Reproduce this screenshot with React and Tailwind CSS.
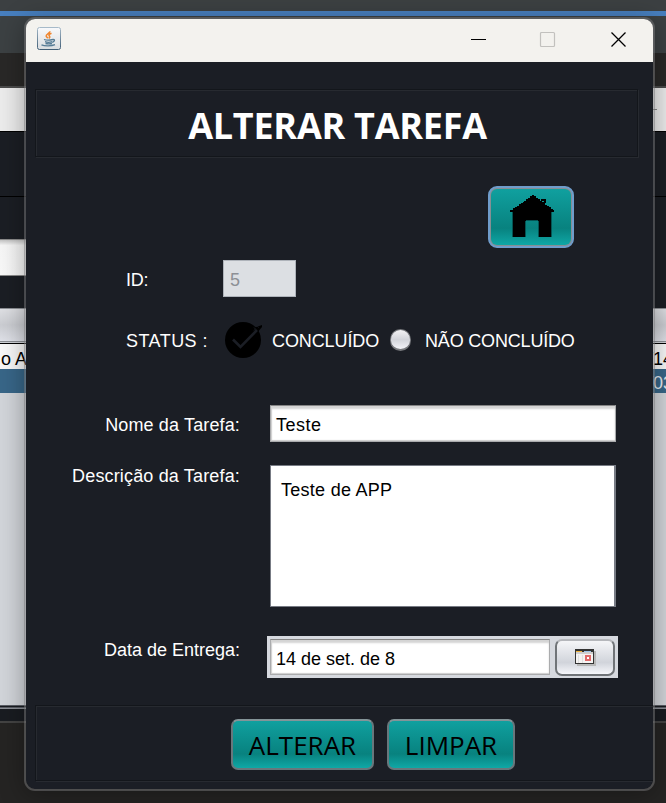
import React from 'react';

const sans = "font-['Liberation_Sans',Arial,sans-serif]";

function Desktop() {
  return (
    <div className="flex h-[803px] w-full flex-col bg-[#252423]">
      <div className="h-[11px] bg-[#3c4042]" />
      <div className="h-[5px] bg-[#477fbf]" />
      <div className="h-[37px] bg-[#3c4143]" />
      <div className="h-[33px] bg-[#292827]" />
      <div className="h-[2px] bg-[#4b4b4b]" />
      <div className="flex h-[43px] items-center justify-end bg-[#ececec]">
        <div className="mr-[9px] h-px w-[10px] bg-[#888]" />
      </div>
      <div className="h-px bg-black" />
      <div className="h-[64px] bg-[#1b1e24]" />
      <div className="h-px bg-black" />
      <div className="h-[42px] bg-[#1b1e24]" />
      <div className="flex h-[37px] bg-[#1b1e24]">
        <div className="w-[26px] border-y border-[#8b8b8b] bg-gradient-to-b from-[#c4c4c4] via-[#f6f6f6] via-15% to-[#f8f8f8]" />
      </div>
      <div className="h-[32px] bg-[#1b1e24]" />
      <div className="h-[34px] border-y border-[#8d9095] bg-gradient-to-b from-[#dfe0e4] via-[#cbcdd2] to-[#dfe1e8]" />
      <div className="h-px bg-[#d0d3d8]" />
      <div className="h-px bg-black" />
      <div className="flex h-[25px] items-center justify-between bg-[#f8f8f8] text-[18px] leading-[22px] text-black">
        <span className="pl-px pt-[5px]">o A</span>
        <span className="-mr-[7px] pt-[5px]">/14</span>
      </div>
      <div className="flex h-[24px] items-center justify-end bg-[#386688] text-[18px] leading-[22px] text-[#e6ebf0]">
        <span className="-mr-[7px] pt-[3px]">/03</span>
      </div>
      <div className="h-[312px] bg-[#d2d5da]" />
      <div className="h-px bg-[#5b5e66]" />
      <div className="h-px bg-[#191c21]" />
      <div className="h-px bg-[#5b5e66]" />
      <div className="h-px bg-[#8d9096]" />
      <div className="h-[12px] bg-[#191c21]" />
      <div className="h-[2px] bg-[#434343]" />
    </div>
  );
}

function JavaIcon() {
  return (
    <svg width="24" height="23" viewBox="0 0 24 23" fill="none">
      <defs>
        <linearGradient id="javaBg" x1="0" y1="0" x2="0" y2="1">
          <stop offset="0" stopColor="#f8f9fb" />
          <stop offset="1" stopColor="#d9dde0" />
        </linearGradient>
        <linearGradient id="javaEdge" x1="0" y1="0" x2="0" y2="1">
          <stop offset="0" stopColor="#a6bac9" />
          <stop offset="1" stopColor="#3f5d75" />
        </linearGradient>
      </defs>
      <rect x=".5" y=".5" width="23" height="22" rx="2" fill="url(#javaBg)" stroke="url(#javaEdge)" />
      <path d="M12.800 4.200c.6 2-4 2.700-3.600 4.900.2 1 1.400 1.300 1.600 2.300M14.500 6.300c-2.600 1-3 2-2 2.900.6.7.2 1.500-.6 2" stroke="#ef8630" strokeWidth="1.600" />
      <path d="M7 12.500c2 .8 6 .8 9 0M8 14.700c2 .7 5 .7 7 0M8.500 16.500c2 .5 4.500.5 6.500 0M15.500 12.400c2.800-.4 2.500 2.100-.3 2.900M4.500 17.800c3 1.400 10 1.400 13.500-.2" stroke="#557b95" strokeWidth="1.300" />
    </svg>
  );
}

function TitleBar() {
  return (
    <div className="flex h-[43px] shrink-0 items-start justify-between bg-[#f3f2ee] pl-[11px] pr-[26px] pt-[8px]">
      <JavaIcon />
      <div className="flex pt-[4px]">
        <svg width="17" height="17" className="mr-[52px] shrink-0"><path d="M1 8.500h15" stroke="#000" /></svg>
        <svg width="17" height="17" className="mr-[54px] shrink-0"><rect x="1.500" y="1.500" width="14" height="14" rx="1" fill="none" stroke="#c2c1be" strokeWidth="1.200" /></svg>
        <svg width="17" height="17" className="shrink-0"><path d="M1.500 1.500l14 14M15.500 1.500l-14 14" stroke="#000" strokeWidth="1.300" /></svg>
      </div>
    </div>
  );
}

function HomeButton() {
  return (
    <button className="ml-[462px] mt-[29px] flex h-[62px] w-[86px] shrink-0 rounded-[9px] border-2 border-[#6f9ccb] bg-[#868e93] p-px">
      <span className="flex h-full w-full justify-center rounded-[6px] bg-gradient-to-b from-[#10a09f] via-[#08827f] via-70% to-[#0fa7a6] pt-[5px]">
        <svg width="46" height="44" viewBox="0 0 46 44" shapeRendering="crispEdges">
          <path d="M5 18H2v-2h3v-2h2v-1h2v-1h2v-2h2V9h2V8h1V7h2V5h2V4h2V2h2V1h2v1h2v2h2v1h2v2h2v1h2v1h1v2h2v1h2v1h2v2h2v1h2v2h-3v25H30V27H18v16H5z" fill="#000" />
          <path d="M33 5h5v4h-2V7h-3z" fill="#000" />
          <path d="M17.500 27v16M18 26.500h12M30.500 27v16M43.500 18v25M4.500 18v25" stroke="#045554" />
        </svg>
      </span>
    </button>
  );
}

function CheckIcon() {
  return (
    <svg width="40" height="38" viewBox="0 0 40 38">
      <circle cx="19" cy="19" r="18" fill="#000" />
      <path d="M29 9.500l2-3 7-2.500v2l-5 6z" fill="#000" />
      <path d="M30 6.500l1.500 1.500-1.500 1.500M33.500 5.500l1 1" stroke="#1b1e25" fill="none" />
      <path d="M9 18.500l7.500 7.500L33 9" stroke="#1b1e25" strokeWidth="2.600" fill="none" />
    </svg>
  );
}

function CalendarIcon() {
  return (
    <svg width="21" height="17" viewBox="0 0 21 17" className="shrink-0" shapeRendering="crispEdges">
      <path d="M2 2h19v15H2z" fill="#b8b8b8" />
      <path d="M0 0h19v15H0z" fill="#333" />
      <path d="M1 2h17v12H1z" fill="#f5f3f2" />
      <path d="M1 2h6v1H1z" fill="#f0b43c" />
      <path d="M7 2h2v1H7z" fill="#333" />
      <path d="M9 2h7v1H9z" fill="#9cc5e9" />
      <path d="M16 2h2v1h-2z" fill="#333" />
      <path d="M1 3h17v2H1z" fill="#d0cece" />
      <path d="M3.500 6v8M7.500 6v8" stroke="#e0e0e0" />
      <rect x="11" y="7" width="4" height="4" fill="#fff" stroke="#e06a6a" strokeWidth="2" />
    </svg>
  );
}

function ActionButton({ children, width }) {
  return (
    <button className={`h-[51px] ${width} shrink-0 rounded-[7px] border-2 border-[#68777c] border-t-[#849498] bg-gradient-to-b from-[#10a09f] via-[#08827f] via-70% to-[#10a8a6] font-['Open_Sans','Noto_Sans',sans-serif] text-[26px] leading-none text-black`}>
      {children}
    </button>
  );
}

const etched = 'border border-[#13161b] shadow-[inset_1px_1px_0_#272a30,1px_1px_0_#272a30]';
const sunken = 'border border-[#aaabad] border-t-[#858585] bg-white shadow-[inset_0_3px_2px_#d4d4d4,inset_1px_-1px_1px_#ccc]';

export default function App() {
  return (
    <div className={`relative h-[803px] w-[666px] overflow-hidden ${sans}`}>
      <Desktop />
      <div className="absolute left-[24px] top-[17px] flex h-[774px] w-[631px] flex-col overflow-hidden rounded-[11px] border-2 border-[#777779]/50 bg-[#1b1e25] bg-clip-padding text-[18px] leading-[20px] text-white shadow-[0_4px_26px_rgba(0,0,0,0.32)]">
        <TitleBar />
        <h1 className={`ml-[9px] mt-[27px] flex h-[68px] w-[603px] shrink-0 items-center justify-center pt-[6px] font-['Open_Sans','Noto_Sans',sans-serif] text-[36px] font-bold ${etched}`}>
          <span className="whitespace-nowrap pl-[2px] tracking-[-0.25px]">ALTERAR TAREFA</span>
        </h1>
        <HomeButton />
        <div className="mt-[12px] flex h-[37px] shrink-0 items-center pl-[100px]">
          <label className="w-[97px] pt-[3px] tracking-[-0.3px]">ID:</label>
          <div className="flex h-full w-[73px] items-center border border-[#aeb3ba] bg-[#dcdfe3] pl-[6px] pt-[3px] text-[#8d9096]">5</div>
        </div>
        <div className="mt-[24px] flex h-[38px] shrink-0 items-center whitespace-nowrap pl-[100px]">
          <span className="w-[98px] pt-[2px] tracking-[0.45px]">STATUS :</span>
          <CheckIcon />
          <span className="w-[126px] pl-[8px] pt-[2px] tracking-[-0.1px]">CONCLUÍDO</span>
          <span className="h-[22px] w-[21px] rounded-full border border-b-2 border-[#77797d] bg-gradient-to-b from-[#f3f3f5] via-[#d2d4da] to-[#f3f4f9]" />
          <span className="pl-[14px] pt-[2px] tracking-[-0.18px]">NÃO CONCLUÍDO</span>
        </div>
        <div className="mt-[46px] flex h-[37px] shrink-0 items-center">
          <label className="w-[214px] pt-[3px] text-right tracking-[0.14px]">Nome da Tarefa:</label>
          <div className={`ml-[30px] flex h-full w-[346px] items-center pl-[5px] pt-[3px] tracking-[0.5px] text-black ${sunken}`}>Teste</div>
        </div>
        <div className="mt-[23px] flex h-[142px] shrink-0">
          <label className="w-[214px] pt-px text-right tracking-[0.16px]">Descrição da Tarefa:</label>
          <div className="ml-[30px] h-full w-[346px] border border-r-2 border-[#777b84] bg-white pl-[10px] pt-[14px] tracking-[0.27px] text-black">Teste de APP</div>
        </div>
        <div className="mt-[29px] flex h-[42px] shrink-0">
          <label className="w-[214px] pt-[4px] text-right">Data de Entrega:</label>
          <div className="ml-[27px] flex h-full w-[351px] items-center bg-[#d6d9df] pl-[3px]">
            <div className={`flex h-[36px] w-[280px] items-center pl-[5px] pt-[4px] text-black ${sunken}`}>14 de set. de 8</div>
            <button className="ml-[5px] mt-px flex h-[37px] w-[60px] items-center justify-center rounded-[7px] border-2 border-[#707478] border-t-[#b5b7bb] bg-gradient-to-b from-[#f5f6f8] via-[#d1d4db] via-65% to-[#f6f7fb]">
              <CalendarIcon />
            </button>
          </div>
        </div>
        <div className={`ml-[9px] mt-[27px] flex h-[76px] w-[625px] shrink-0 gap-[13px] pl-[195px] pt-[13px] ${etched}`}>
          <ActionButton width="w-[143px]">ALTERAR</ActionButton>
          <ActionButton width="w-[128px]">LIMPAR</ActionButton>
        </div>
      </div>
    </div>
  );
}
